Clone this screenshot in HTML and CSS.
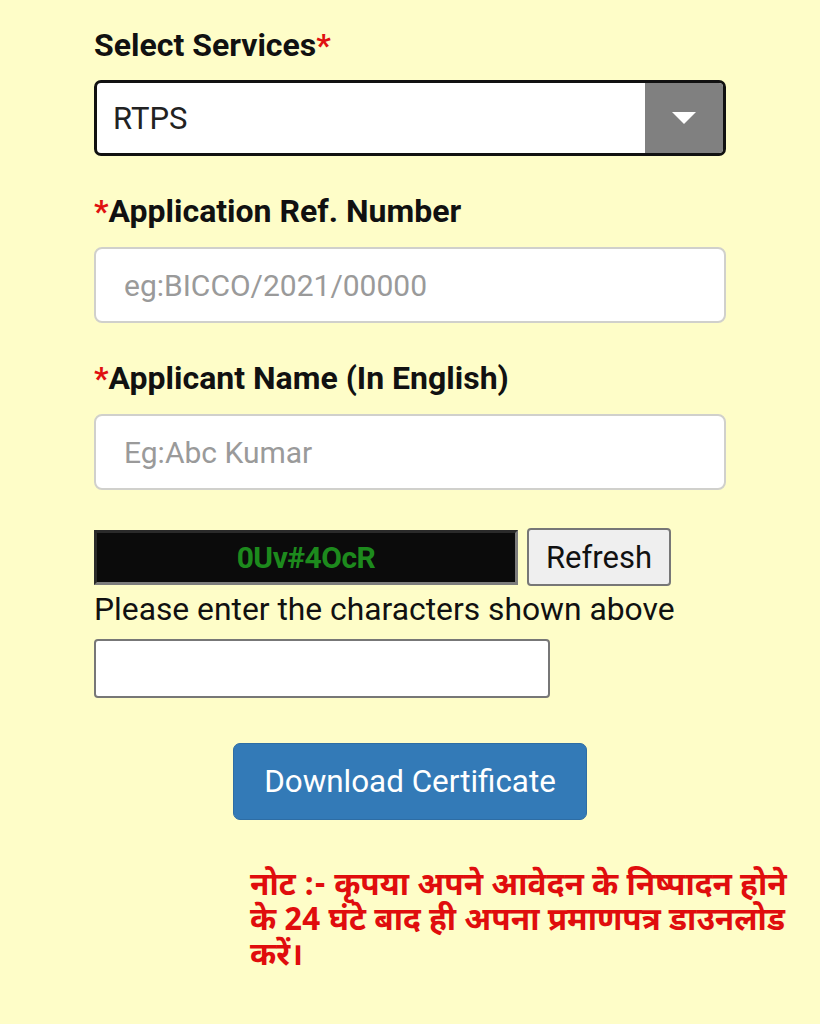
FILE: index.html
```html
<!DOCTYPE html>
<html lang="en">
<head>
<meta charset="utf-8">
<title>Download Certificate</title>
<link rel="stylesheet" href="styles.css">
</head>
<body>
<main class="form">
  <div class="field">
    <label class="label">Select Services<span class="req">*</span></label>
    <div class="select">
      <span class="select-value">RTPS</span>
      <span class="select-btn"><svg width="24" height="12" viewBox="0 0 24 12"><polygon points="0,0 24,0 12,12" fill="#fff"/></svg></span>
    </div>
  </div>
  <div class="field">
    <label class="label"><span class="req">*</span>Application Ref. Number</label>
    <input class="input" type="text" placeholder="eg:BICCO/2021/00000">
  </div>
  <div class="field">
    <label class="label"><span class="req">*</span>Applicant Name (In English)</label>
    <input class="input" type="text" placeholder="Eg:Abc Kumar">
  </div>
  <div class="captcha-row">
    <div class="captcha">0Uv#4OcR</div>
    <button class="refresh" type="button">Refresh</button>
  </div>
  <p class="hint">Please enter the characters shown above</p>
  <input class="captcha-input" type="text">
  <div class="actions">
    <button class="download" type="button">Download Certificate</button>
  </div>
</main>
<p class="note">नोट :- कृपया अपने आवेदन के निष्पादन होने के 24 घंटे बाद ही अपना प्रमाणपत्र डाउनलोड करें।</p>
</body>
</html>
```
FILE: styles.css
```css
html, body {
  margin: 0;
  padding: 0;
}
body {
  background: #fefdc8;
  font-family: Roboto, "Noto Sans", sans-serif;
  color: #111;
}
.form {
  width: 632px;
  margin: 0 auto;
  padding-top: 28px;
  display: flex;
  flex-direction: column;
}
.field {
  display: flex;
  flex-direction: column;
  margin-bottom: 38px;
}
.label {
  font-size: 32px;
  font-weight: 700;
  line-height: 34px;
  margin-bottom: 19px;
}
.req {
  color: #e01010;
}
.select {
  height: 76px;
  box-sizing: border-box;
  border: 3px solid #111;
  border-radius: 7px;
  background: #fff;
  display: flex;
  align-items: stretch;
  overflow: hidden;
  margin-top: -1px;
}
.select-value {
  flex: 1;
  display: flex;
  align-items: center;
  padding-left: 16px;
  font-size: 31px;
  color: #222;
}
.select-btn {
  width: 78px;
  background: #808080;
  display: flex;
  align-items: center;
  justify-content: center;
}
.input {
  height: 76px;
  box-sizing: border-box;
  border: 2px solid #d0d0cc;
  border-radius: 8px;
  background: #fff;
  padding: 0 28px;
  font-family: Roboto, sans-serif;
  font-size: 30px;
  color: #333;
  outline: none;
}
.input::placeholder {
  color: #9a9a9a;
}
.captcha-row {
  display: flex;
  align-items: center;
  gap: 9px;
}
.captcha {
  width: 424px;
  height: 55px;
  box-sizing: border-box;
  background: #0b0b0b;
  border-style: solid;
  border-width: 3px;
  border-color: #2a2a2a #7c7c7c #7c7c7c #2a2a2a;
  display: flex;
  align-items: center;
  justify-content: center;
  color: #1d8a1d;
  font-size: 30px;
  font-weight: 700;
  letter-spacing: -0.5px;
}
.refresh {
  width: 144px;
  height: 58px;
  box-sizing: border-box;
  background: #efefef;
  border: 2px solid #777;
  border-radius: 4px;
  font-family: Roboto, sans-serif;
  font-size: 31px;
  color: #111;
  padding: 0;
}
.hint {
  margin: 5px 0 12px;
  font-size: 31.8px;
  line-height: 36px;
}
.captcha-input {
  width: 456px;
  height: 59px;
  box-sizing: border-box;
  border: 2px solid #777;
  border-radius: 4px;
  background: #fff;
}
.actions {
  display: flex;
  justify-content: center;
  margin-top: 45px;
}
.download {
  width: 354px;
  height: 77px;
  background: #337ab7;
  border: 1px solid #2e6da4;
  border-radius: 7px;
  color: #fff;
  font-family: Roboto, sans-serif;
  font-size: 31.4px;
  padding: 0;
}
.note {
  margin: 50px 0 0 250px;
  width: 560px;
  color: #e00d0d;
  font-family: "Noto Sans Devanagari", "Lohit Devanagari", "Noto Sans", sans-serif;
  font-weight: 700;
  font-size: 31.6px;
  line-height: 35px;
}
```
